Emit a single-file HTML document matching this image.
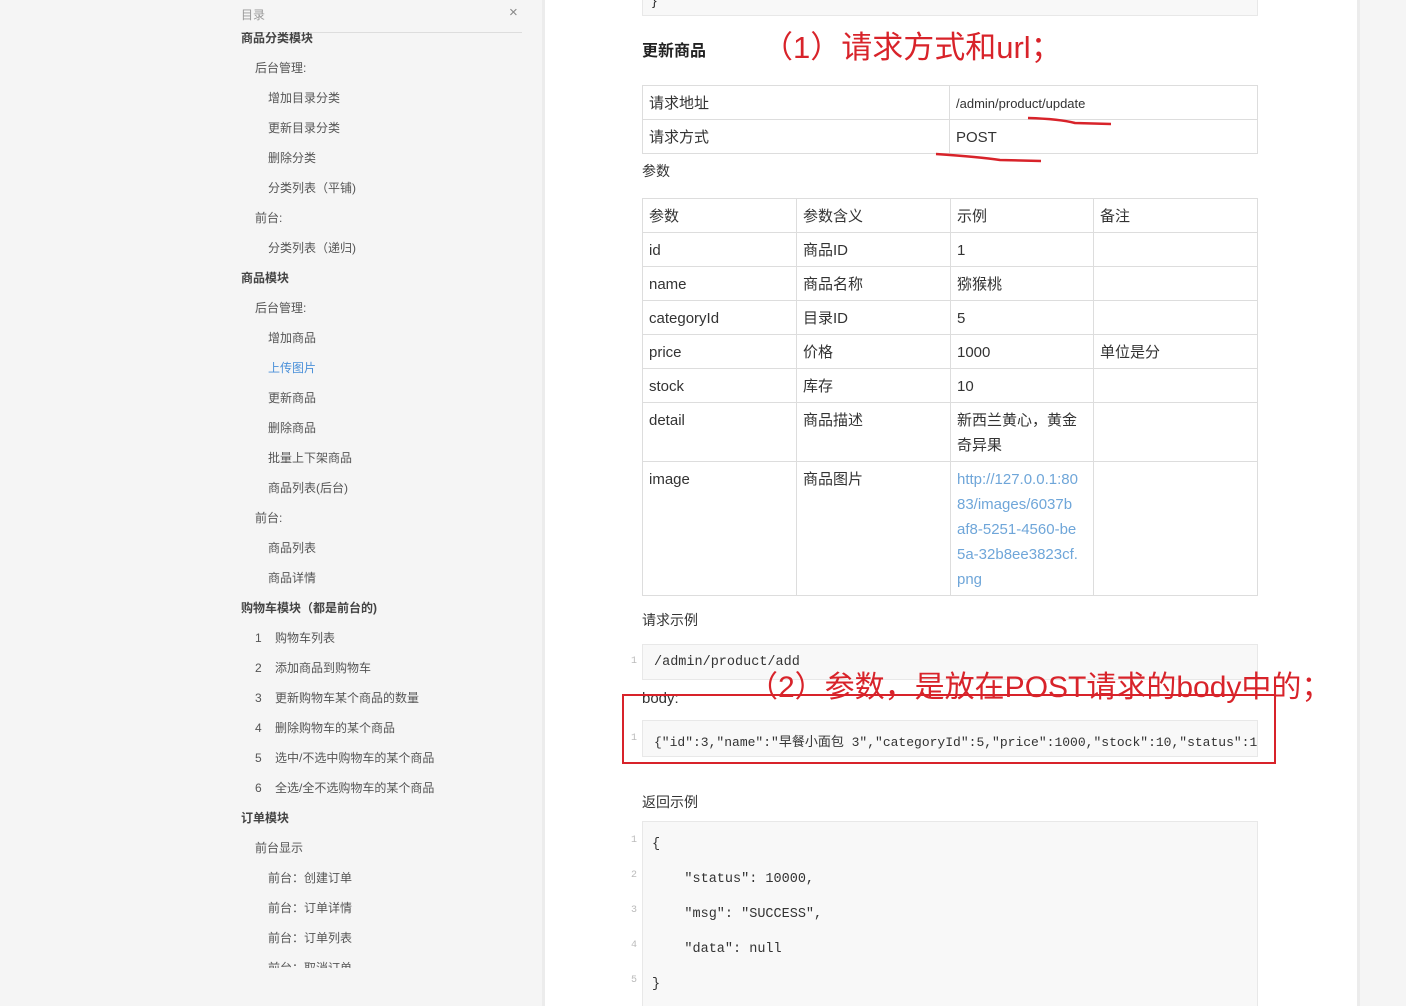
<!DOCTYPE html>
<html style="height:1006px;overflow:hidden"><head><meta charset="utf-8"><style>
*{margin:0;padding:0;box-sizing:border-box}
body{width:1406px;height:1006px;overflow:hidden;background:#f5f5f5;font-family:"Liberation Sans","Noto Sans CJK SC",sans-serif;position:relative;color:#333}
.main{position:absolute;left:542px;top:0;width:818px;height:1006px;background:#fff;border-left:3px solid #ececec;border-right:3px solid #ececec}
.a{position:absolute;white-space:nowrap}
.sb{position:absolute;left:230px;top:32px;width:300px;height:936px;overflow:hidden}
.sb div{position:absolute;font-size:12px;color:#555;line-height:16px;white-space:nowrap}
.sb .b{font-weight:bold;color:#444}
table{position:absolute;border-collapse:collapse;font-size:15px;color:#333}
td{border:1px solid #ddd;padding:0 6px;vertical-align:top;line-height:25px}
.code{position:absolute;left:642px;width:616px;background:#f8f8f8;border:1px solid #e8e8e8;font-family:"Liberation Mono","Noto Sans CJK SC",monospace;font-size:13.5px;color:#333;overflow:hidden;white-space:nowrap}
.ln{position:absolute;font-size:10px;color:#bbb;font-family:"Liberation Mono",monospace}
.red{position:absolute;color:#d8232a;white-space:nowrap}
</style></head><body>
<div class="main"></div>
<div class="a" style="left:241px;top:6px;font-size:12px;color:#999">目录</div>
<div class="a" style="left:509px;top:4px;font-size:15px;color:#888">×</div>
<div class="a" style="left:241px;top:32px;width:281px;height:1px;background:#ddd"></div>
<div class="sb">
<div class="b" style="left:11px;top:-2px">商品分类模块</div>
<div style="left:25px;top:28px">后台管理:</div>
<div style="left:38px;top:58px">增加目录分类</div>
<div style="left:38px;top:88px">更新目录分类</div>
<div style="left:38px;top:118px">删除分类</div>
<div style="left:38px;top:148px">分类列表（平铺)</div>
<div style="left:25px;top:178px">前台:</div>
<div style="left:38px;top:208px">分类列表（递归)</div>
<div class="b" style="left:11px;top:238px">商品模块</div>
<div style="left:25px;top:268px">后台管理:</div>
<div style="left:38px;top:298px">增加商品</div>
<div style="left:38px;top:328px;color:#4a90d9">上传图片</div>
<div style="left:38px;top:358px">更新商品</div>
<div style="left:38px;top:388px">删除商品</div>
<div style="left:38px;top:418px">批量上下架商品</div>
<div style="left:38px;top:448px">商品列表(后台)</div>
<div style="left:25px;top:478px">前台:</div>
<div style="left:38px;top:508px">商品列表</div>
<div style="left:38px;top:538px">商品详情</div>
<div class="b" style="left:11px;top:568px">购物车模块（都是前台的)</div>
<div style="left:25px;top:598px">1&nbsp;&nbsp;&nbsp;&nbsp;购物车列表</div>
<div style="left:25px;top:628px">2&nbsp;&nbsp;&nbsp;&nbsp;添加商品到购物车</div>
<div style="left:25px;top:658px">3&nbsp;&nbsp;&nbsp;&nbsp;更新购物车某个商品的数量</div>
<div style="left:25px;top:688px">4&nbsp;&nbsp;&nbsp;&nbsp;删除购物车的某个商品</div>
<div style="left:25px;top:718px">5&nbsp;&nbsp;&nbsp;&nbsp;选中/不选中购物车的某个商品</div>
<div style="left:25px;top:748px">6&nbsp;&nbsp;&nbsp;&nbsp;全选/全不选购物车的某个商品</div>
<div class="b" style="left:11px;top:778px">订单模块</div>
<div style="left:25px;top:808px">前台显示</div>
<div style="left:38px;top:838px">前台：创建订单</div>
<div style="left:38px;top:868px">前台：订单详情</div>
<div style="left:38px;top:898px">前台：订单列表</div>
<div style="left:38px;top:928px">前台：取消订单</div>
</div>

<div class="code" style="top:-2px;height:18px"></div>
<div class="a" style="left:652px;top:-8px;font-size:14px;color:#333">}</div>
<div class="a" style="left:642px;top:37px;font-size:16px;font-weight:bold;color:#222">更新商品</div>
<div class="red" style="left:762px;top:29px;font-size:31px;line-height:38px">（1）请求方式和url；</div>

<table style="left:642px;top:85px;width:616px">
<tr style="height:34px"><td style="width:307px;padding-top:5px">请求地址</td><td style="font-size:13px;padding-top:5px">/admin/product/update</td></tr>
<tr style="height:34px"><td style="padding-top:5px">请求方式</td><td style="padding-top:5px">POST</td></tr>
</table>
<svg class="a" style="left:0;top:0" width="1406" height="1006"><path d="M1028 118 Q1060 119 1075 123 L1111 124" stroke="#d8232a" stroke-width="2.5" fill="none"/><path d="M936 154 Q980 157 1000 160 L1041 161" stroke="#d8232a" stroke-width="2.5" fill="none"/></svg>
<div class="a" style="left:642px;top:161px;font-size:14px">参数</div>

<table style="left:642px;top:198px;width:616px">
<tr style="height:34px"><td style="width:154px;padding-top:5px">参数</td><td style="width:154px;padding-top:5px">参数含义</td><td style="width:143px;padding-top:5px">示例</td><td style="padding-top:5px">备注</td></tr>
<tr style="height:34px"><td style="padding-top:5px">id</td><td style="padding-top:5px">商品ID</td><td style="padding-top:5px">1</td><td></td></tr>
<tr style="height:34px"><td style="padding-top:5px">name</td><td style="padding-top:5px">商品名称</td><td style="padding-top:5px">猕猴桃</td><td></td></tr>
<tr style="height:34px"><td style="padding-top:5px">categoryId</td><td style="padding-top:5px">目录ID</td><td style="padding-top:5px">5</td><td></td></tr>
<tr style="height:34px"><td style="padding-top:5px">price</td><td style="padding-top:5px">价格</td><td style="padding-top:5px">1000</td><td style="padding-top:5px">单位是分</td></tr>
<tr style="height:34px"><td style="padding-top:5px">stock</td><td style="padding-top:5px">库存</td><td style="padding-top:5px">10</td><td></td></tr>
<tr style="height:59px"><td style="padding-top:5px">detail</td><td style="padding-top:5px">商品描述</td><td style="padding-top:5px;white-space:normal">新西兰黄心，黄金<br>奇异果</td><td></td></tr>
<tr style="height:134px"><td style="padding-top:5px">image</td><td style="padding-top:5px">商品图片</td><td style="padding-top:5px;color:#6fa6d9">http://127.0.0.1:80<br>83/images/6037b<br>af8-5251-4560-be<br>5a-32b8ee3823cf.<br>png</td><td></td></tr>
</table>

<div class="a" style="left:642px;top:610px;font-size:14px">请求示例</div>
<div class="code" style="top:644px;height:36px;padding:10px 0 0 11px">/admin/product/add</div>
<div class="ln" style="left:631px;top:656px">1</div>
<div class="a" style="left:642px;top:690px;font-size:15px">body:</div>
<div class="code" style="top:720px;height:37px;padding:10px 0 0 11px;font-size:13px">{"id":3,"name":"早餐小面包 3","categoryId":5,"price":1000,"stock":10,"status":1}</div>
<div class="ln" style="left:631px;top:733px">1</div>
<div class="a" style="left:622px;top:694px;width:654px;height:70px;border:2px solid #d8232a"></div>
<div class="red" style="left:748px;top:670px;font-size:30px;line-height:36px">（2）参数，是放在POST请求的body中的；</div>

<div class="a" style="left:642px;top:792px;font-size:14px">返回示例</div>
<div class="code" style="top:821px;height:190px"></div>
<div class="a" style="left:652px;top:827px;font-family:'Liberation Mono',monospace;font-size:13.5px;line-height:35px;white-space:pre">{
    "status": 10000,
    "msg": "SUCCESS",
    "data": null
}</div>
<div class="ln" style="left:631px;top:823px;line-height:35px;white-space:pre">1
2
3
4
5</div>
</body></html>
